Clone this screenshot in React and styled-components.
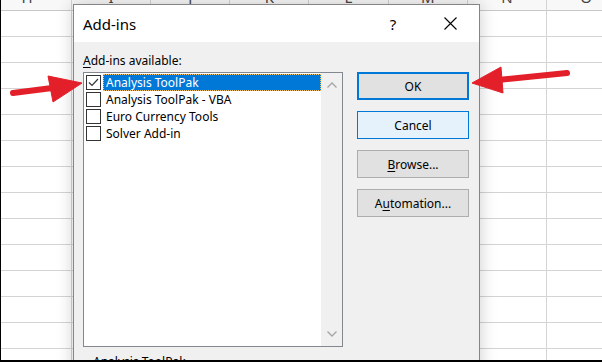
import React from "react";
import styled, { createGlobalStyle } from "styled-components";

const Global = createGlobalStyle`
  html, body { margin: 0; padding: 0; background: #fff; overflow: hidden; }
  * { box-sizing: border-box; }
`;

const Frame = styled.div`
  position: relative;
  width: 602px;
  height: 362px;
  overflow: hidden;
  background: #fff;
  border-left: 1px solid #000;
  border-bottom: 2px solid #000;
  font-family: "Noto Sans", "Open Sans", sans-serif;
`;

const Sheet = styled.div`
  display: grid;
  grid-template-columns: 89px repeat(7, 79.17px);
  margin-left: -18px;
`;

const HeaderCell = styled.div`
  height: 11px;
  overflow: hidden;
  display: flex;
  align-items: flex-end;
  justify-content: center;
  background: #f8f8f8;
  border-right: 1px solid #d4d4d4;
  border-bottom: 1px solid #c8c8c8;
`;

const Letter = styled.span`
  font-size: 15px;
  line-height: 12px;
  margin-bottom: 7px;
  color: #444;
`;

const Cell = styled.div`
  height: 26px;
  border-right: 1px solid #d4d4d4;
  border-bottom: 1px solid #d4d4d4;
`;

const Dialog = styled.div`
  position: absolute;
  left: 72px;
  top: 4px;
  width: 407px;
  height: 420px;
  border: 1px solid #858585;
  background: #f0f0f0;
  box-shadow: 0 0 16px rgba(0, 0, 0, 0.2);
  display: flex;
  flex-direction: column;
`;

const TitleBar = styled.div`
  height: 37px;
  background: #fff;
  display: flex;
  align-items: center;
  padding: 0 6px 0 9px;
  gap: 11px;
`;

const Title = styled.div`
  flex: 1;
  font-size: 15px;
  color: #000;
`;

const CaptionButton = styled.div`
  width: 46px;
  height: 37px;
  display: flex;
  align-items: center;
  justify-content: center;
  font-size: 15px;
  color: #000;
`;

const Body = styled.div`
  padding: 11px 10px 0 9px;
  display: flex;
  flex-direction: column;
`;

const Label = styled.div`
  font-size: 12px;
  line-height: 16px;
  height: 16px;
  margin-bottom: 3px;
  color: #000;
`;

const Key = styled.span`
  text-decoration: underline;
  text-underline-offset: 2px;
`;

const Row = styled.div`
  display: flex;
  gap: 14px;
`;

const ListBox = styled.div`
  width: 260px;
  height: 275px;
  border: 1px solid #828790;
  background: #fff;
  display: flex;
`;

const Items = styled.div`
  flex: 1;
  padding-top: 1px;
  display: flex;
  flex-direction: column;
`;

const Item = styled.div`
  height: 17px;
  display: flex;
  align-items: center;
  padding-left: 2px;
`;

const Box = styled.div`
  width: 15px;
  height: 15px;
  border: 1px solid #333;
  background: #fff;
  display: flex;
  align-items: center;
  justify-content: center;
  flex: none;
`;

const ItemText = styled.div`
  flex: 1;
  margin-left: 2px;
  height: 17px;
  font-size: 12px;
  line-height: 15px;
  color: ${(p) => (p.$selected ? "#fff" : "#000")};
  background: ${(p) => (p.$selected ? "#0078d7" : "transparent")};
  border: 1px dotted ${(p) => (p.$selected ? "#f3c16e" : "transparent")};
  padding-left: 2px;
  white-space: nowrap;
`;

const ScrollBar = styled.div`
  width: 21px;
  background: #f0f0f0;
  display: flex;
  flex-direction: column;
  justify-content: space-between;
  align-items: center;
  padding: 9px 0 9px 0;
`;

const Buttons = styled.div`
  display: flex;
  flex-direction: column;
  gap: 11px;
`;

const Button = styled.div`
  width: 112px;
  height: 28px;
  display: flex;
  align-items: center;
  justify-content: center;
  font-size: 12px;
  color: #000;
  background: ${(p) => (p.$variant === "hover" ? "#e5f1fb" : "#e1e1e1")};
  border: ${(p) =>
    p.$variant === "default"
      ? "2px solid #0078d7"
      : p.$variant === "hover"
      ? "1px solid #0078d7"
      : "1px solid #adadad"};
`;

const Group = styled.fieldset`
  margin: 7px 0 0 0;
  padding: 0 0 40px 0;
  border: 1px solid #dcdcdc;
  width: 260px;
`;

const Legend = styled.legend`
  margin-left: 8px;
  padding: 0 1px;
  font-size: 12px;
  line-height: 16px;
  color: #000;
`;

const Arrows = styled.svg`
  position: absolute;
  left: 0;
  top: 0;
  width: 601px;
  height: 360px;
  pointer-events: none;
`;

const columns = ["H", "I", "J", "K", "L", "M", "N", "O"];
const items = [
  "Analysis ToolPak",
  "Analysis ToolPak - VBA",
  "Euro Currency Tools",
  "Solver Add-in",
];

const Chevron = ({ up }) => (
  <svg width="10" height="6" viewBox="0 0 10 6">
    <polyline
      points={up ? "0.5,5.5 5,1 9.5,5.5" : "0.5,0.5 5,5 9.5,0.5"}
      fill="none"
      stroke="#a6a6a6"
      strokeWidth="1.4"
    />
  </svg>
);

export default function App() {
  return (
    <>
      <Global />
      <Frame>
        <Sheet>
          {columns.map((c) => (
            <HeaderCell key={c}>
              <Letter>{c}</Letter>
            </HeaderCell>
          ))}
          {Array.from({ length: 14 * 8 }).map((_, i) => (
            <Cell key={i} />
          ))}
        </Sheet>

        <Dialog>
          <TitleBar>
            <Title>Add-ins</Title>
            <CaptionButton>?</CaptionButton>
            <CaptionButton>
              <svg width="13" height="13" viewBox="0 0 13 13">
                <path d="M0.5 0.5 L12.5 12.5 M12.5 0.5 L0.5 12.5" stroke="#000" strokeWidth="1.1" />
              </svg>
            </CaptionButton>
          </TitleBar>
          <Body>
            <Label>
              <Key>A</Key>dd-ins available:
            </Label>
            <Row>
              <ListBox>
                <Items>
                  {items.map((t, i) => (
                    <Item key={t}>
                      <Box>
                        {i === 0 && (
                          <svg width="11" height="11" viewBox="0 0 11 11">
                            <polyline
                              points="1,5.5 4,8.5 10,2"
                              fill="none"
                              stroke="#333"
                              strokeWidth="1.2"
                            />
                          </svg>
                        )}
                      </Box>
                      <ItemText $selected={i === 0}>{t}</ItemText>
                    </Item>
                  ))}
                </Items>
                <ScrollBar>
                  <Chevron up />
                  <Chevron />
                </ScrollBar>
              </ListBox>
              <Buttons>
                <Button $variant="default">OK</Button>
                <Button $variant="hover">Cancel</Button>
                <Button>
                  <span>
                    <Key>B</Key>rowse...
                  </span>
                </Button>
                <Button>
                  <span>
                    A<Key>u</Key>tomation...
                  </span>
                </Button>
              </Buttons>
            </Row>
            <Group>
              <Legend>Analysis ToolPak</Legend>
            </Group>
          </Body>
        </Dialog>

        <Arrows viewBox="1 0 601 360">
          <g fill="#e3202a" stroke="#e3202a" strokeLinejoin="round">
            <line x1="13" y1="93" x2="56" y2="87.5" strokeWidth="6" strokeLinecap="round" />
            <polygon points="48,76 82,83 53,102" strokeWidth="1" />
            <line x1="567" y1="73" x2="498" y2="80" strokeWidth="6" strokeLinecap="round" />
            <polygon points="501,67 472,83 503,93" strokeWidth="1" />
          </g>
        </Arrows>
      </Frame>
    </>
  );
}
